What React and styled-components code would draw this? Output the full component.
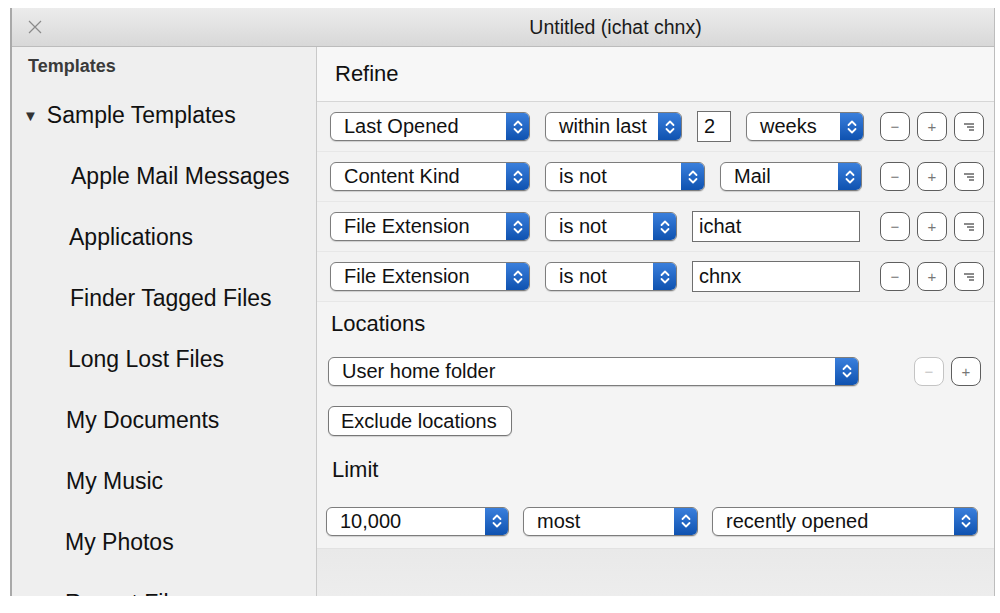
import React from 'react';
import styled, { createGlobalStyle } from 'styled-components';

const GlobalStyle = createGlobalStyle`
  html, body {
    margin: 0;
    background: #ffffff;
    font-family: "Liberation Sans", Arial, sans-serif;
    color: #111;
  }
`;

const Window = styled.div`
  margin: 8px 5px 0 10px;
  height: 588px;
  display: flex;
  flex-direction: column;
  border-left: 2px solid #a9a9a9;
  border-right: 1px solid #bdbdbd;
  overflow: hidden;
`;

const TitleBar = styled.div`
  height: 38px;
  flex: none;
  display: flex;
  align-items: center;
  padding: 0 0 0 16px;
  background: linear-gradient(#ececec, #d8d8d8);
  border-bottom: 1px solid #bcbcbc;
`;

const CloseBox = styled.div`
  width: 14px;
  height: 14px;
  display: flex;
`;

const Title = styled.div`
  flex: 1;
  text-align: center;
  padding-left: 195px;
  font-size: 19.5px;
  color: #1a1a1a;
`;

const Body = styled.div`
  flex: 1;
  display: flex;
  min-height: 0;
`;

const Sidebar = styled.div`
  width: 304px;
  flex: none;
  background: #efefef;
  border-right: 1px solid #c9c9c9;
  padding: 1px 0 0 0;
  overflow: hidden;
`;

const SidebarHeading = styled.div`
  font-size: 18px;
  font-weight: bold;
  color: #3a3a3a;
  padding-left: 16px;
  height: 36px;
  line-height: 36px;
`;

const GroupRow = styled.div`
  display: flex;
  align-items: center;
  gap: 9px;
  padding-left: 11px;
  height: 62px;
  font-size: 23px;
`;

const Triangle = styled.span`
  font-size: 15px;
  color: #333;
`;

const SidebarItem = styled.div`
  height: 61px;
  line-height: 61px;
  padding-left: ${p => p.$indent}px;
  font-size: 23px;
  white-space: nowrap;
`;

const Main = styled.div`
  flex: 1;
  display: flex;
  flex-direction: column;
  background: #f4f4f4;
`;

const SectionHeader = styled.div`
  height: ${p => p.$h}px;
  flex: none;
  display: flex;
  align-items: center;
  padding-left: ${p => p.$indent}px;
  font-size: 22px;
  color: #111;
  border-bottom: ${p => (p.$line ? '1px solid #d6d6d6' : 'none')};
  background: ${p => (p.$line ? '#f7f7f7' : 'transparent')};
`;

const CriteriaRow = styled.div`
  height: 49px;
  flex: none;
  display: flex;
  align-items: center;
  gap: 15px;
  padding: 0 10px 0 13px;
  background: #f2f2f2;
  border-bottom: 1px solid #e7e7e7;
`;

const ControlRow = styled.div`
  height: ${p => p.$h}px;
  flex: none;
  display: flex;
  align-items: center;
  gap: 14px;
  padding: 0 13px 0 ${p => p.$indent}px;
`;

const PopupBox = styled.div`
  width: ${p => p.$w}px;
  height: 29px;
  flex: none;
  display: flex;
  align-items: stretch;
  background: #fff;
  border: 1px solid #7d7d7d;
  border-radius: 6px;
  box-shadow: 0 1px 1px rgba(0, 0, 0, 0.15);
  overflow: hidden;
  box-sizing: border-box;
`;

const PopupLabel = styled.div`
  flex: 1;
  display: flex;
  align-items: center;
  padding-left: 13px;
  font-size: 20px;
  white-space: nowrap;
  overflow: hidden;
`;

const Stepper = styled.div`
  width: 23px;
  flex: none;
  display: flex;
  align-items: center;
  justify-content: center;
  background: linear-gradient(#3a7fdc, #0f52b0);
`;

const TextField = styled.div`
  width: ${p => p.$w}px;
  height: 31px;
  flex: none;
  box-sizing: border-box;
  display: flex;
  align-items: center;
  padding-left: 6px;
  background: #fff;
  border: 1px solid #6f6f6f;
  font-size: 20px;
`;

const ButtonGroup = styled.div`
  margin-left: auto;
  display: flex;
  gap: 7px;
`;

const MiniButton = styled.div`
  width: 30px;
  height: 29px;
  box-sizing: border-box;
  display: flex;
  align-items: center;
  justify-content: center;
  background: #fff;
  border: 1.5px solid ${p => (p.$disabled ? '#c4c4c4' : '#5e5e5e')};
  border-radius: 8px;
  color: ${p => (p.$disabled ? '#c4c4c4' : '#777')};
  font-size: 15px;
`;

const PushButton = styled.div`
  width: ${p => p.$w}px;
  height: 30px;
  box-sizing: border-box;
  display: flex;
  align-items: center;
  padding-left: 12px;
  background: #fff;
  border: 1px solid #777;
  border-radius: 6px;
  box-shadow: 0 1px 1px rgba(0, 0, 0, 0.15);
  font-size: 20px;
  white-space: nowrap;
`;

const BottomBand = styled.div`
  flex: 1;
  background: linear-gradient(#e9e9e9, #ededed);
  border-top: 1px solid #e2e2e2;
`;

const StepperIcon = () => (
  <svg width="12" height="16" viewBox="0 0 12 16">
    <path d="M2.5 6 L6 2.5 L9.5 6 M2.5 10 L6 13.5 L9.5 10" fill="none" stroke="#fff" strokeWidth="1.8" strokeLinecap="round" strokeLinejoin="round" />
  </svg>
);

const NestIcon = () => (
  <svg width="14" height="12" viewBox="0 0 14 12">
    <path d="M2 3 H12 M5 6 H12 M7 9 H12" stroke="#666" strokeWidth="1.3" />
  </svg>
);

const Popup = ({ w, children }) => (
  <PopupBox $w={w}>
    <PopupLabel>{children}</PopupLabel>
    <Stepper><StepperIcon /></Stepper>
  </PopupBox>
);

const RowButtons = () => (
  <ButtonGroup>
    <MiniButton>−</MiniButton>
    <MiniButton>+</MiniButton>
    <MiniButton><NestIcon /></MiniButton>
  </ButtonGroup>
);

const templates = [
  { name: 'Apple Mail Messages', indent: 59 },
  { name: 'Applications', indent: 57 },
  { name: 'Finder Tagged Files', indent: 58 },
  { name: 'Long Lost Files', indent: 56 },
  { name: 'My Documents', indent: 54 },
  { name: 'My Music', indent: 54 },
  { name: 'My Photos', indent: 53 },
  { name: 'Recent Files', indent: 53 },
];

export default function App() {
  return (
    <>
      <GlobalStyle />
      <Window>
        <TitleBar>
          <CloseBox>
            <svg width="14" height="14" viewBox="0 0 14 14">
              <path d="M1 1 L13 13 M13 1 L1 13" stroke="#8a8a8a" strokeWidth="1.2" />
            </svg>
          </CloseBox>
          <Title>Untitled (ichat chnx)</Title>
        </TitleBar>
        <Body>
          <Sidebar>
            <SidebarHeading>Templates</SidebarHeading>
            <GroupRow><Triangle>▼</Triangle>Sample Templates</GroupRow>
            {templates.map(t => (
              <SidebarItem key={t.name} $indent={t.indent}>{t.name}</SidebarItem>
            ))}
          </Sidebar>
          <Main>
            <SectionHeader $h={54} $indent={18} $line>Refine</SectionHeader>
            <CriteriaRow>
              <Popup w={200}>Last Opened</Popup>
              <Popup w={137}>within last</Popup>
              <TextField $w={34}>2</TextField>
              <Popup w={118}>weeks</Popup>
              <RowButtons />
            </CriteriaRow>
            <CriteriaRow>
              <Popup w={200}>Content Kind</Popup>
              <Popup w={160}>is not</Popup>
              <Popup w={142}>Mail</Popup>
              <RowButtons />
            </CriteriaRow>
            <CriteriaRow>
              <Popup w={200}>File Extension</Popup>
              <Popup w={132}>is not</Popup>
              <TextField $w={168}>ichat</TextField>
              <RowButtons />
            </CriteriaRow>
            <CriteriaRow>
              <Popup w={200}>File Extension</Popup>
              <Popup w={132}>is not</Popup>
              <TextField $w={168}>chnx</TextField>
              <RowButtons />
            </CriteriaRow>
            <SectionHeader $h={44} $indent={14}>Locations</SectionHeader>
            <ControlRow $h={50} $indent={11}>
              <Popup w={531}>User home folder</Popup>
              <ButtonGroup>
                <MiniButton $disabled>−</MiniButton>
                <MiniButton>+</MiniButton>
              </ButtonGroup>
            </ControlRow>
            <ControlRow $h={50} $indent={11}>
              <PushButton $w={184}>Exclude locations</PushButton>
            </ControlRow>
            <SectionHeader $h={48} $indent={15}>Limit</SectionHeader>
            <ControlRow $h={54} $indent={9}>
              <Popup w={183}>10,000</Popup>
              <Popup w={175}>most</Popup>
              <Popup w={266}>recently opened</Popup>
            </ControlRow>
            <BottomBand />
          </Main>
        </Body>
      </Window>
    </>
  );
}
